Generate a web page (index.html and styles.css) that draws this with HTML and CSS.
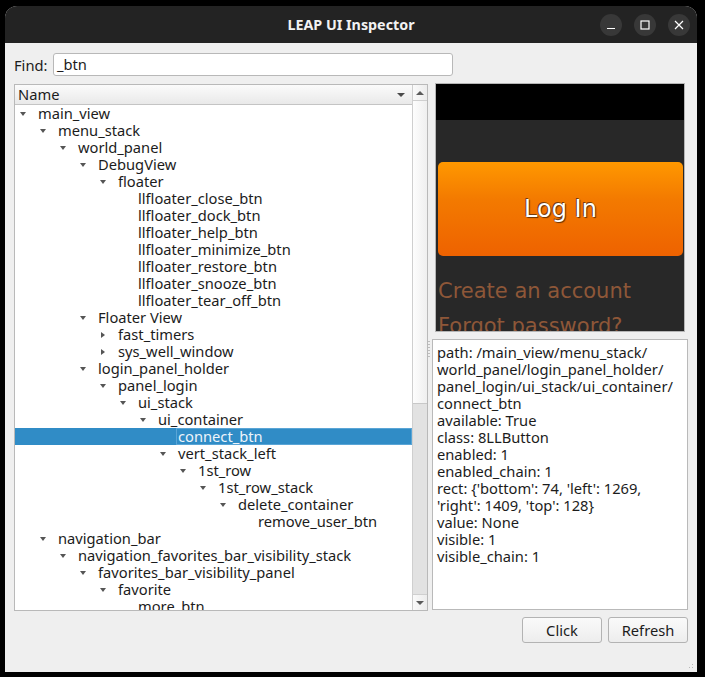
FILE: index.html
```html
<!DOCTYPE html>
<html>
<head>
<meta charset="utf-8">
<title>LEAP UI Inspector</title>
<link rel="stylesheet" href="styles.css">
</head>
<body>
<div class="window">
  <div class="titlebar">
    <div class="tb-spacer"></div>
    <div class="tb-title">LEAP UI Inspector</div>
    <div class="tb-buttons">
      <span class="tb-btn"><svg width="10" height="10" viewBox="0 0 10 10"><path d="M1 8.5H9" stroke="#fff" stroke-width="1.2"/></svg></span>
      <span class="tb-btn"><svg width="10" height="10" viewBox="0 0 10 10"><rect x="1" y="1" width="8" height="8" fill="none" stroke="#fff" stroke-width="1.2"/></svg></span>
      <span class="tb-btn"><svg width="10" height="10" viewBox="0 0 10 10"><path d="M1 1L9 9M9 1L1 9" stroke="#fff" stroke-width="1.2"/></svg></span>
    </div>
  </div>
  <div class="content">
    <div class="find-row">
      <label class="find-label">Find:</label>
      <div class="find-input">_btn</div>
    </div>
    <div class="main">
      <div class="tree">
        <div class="tree-body">
          <div class="tree-header">
            <span>Name</span>
            <span class="sort-arrow"></span>
          </div>
          <div class="rows">
            <div class="row l0"><span class="tw down"></span><span class="lbl">main_view</span></div>
            <div class="row l1"><span class="tw down"></span><span class="lbl">menu_stack</span></div>
            <div class="row l2"><span class="tw down"></span><span class="lbl">world_panel</span></div>
            <div class="row l3"><span class="tw down"></span><span class="lbl">DebugView</span></div>
            <div class="row l4"><span class="tw down"></span><span class="lbl">floater</span></div>
            <div class="row l5"><span class="tw"></span><span class="lbl">llfloater_close_btn</span></div>
            <div class="row l5"><span class="tw"></span><span class="lbl">llfloater_dock_btn</span></div>
            <div class="row l5"><span class="tw"></span><span class="lbl">llfloater_help_btn</span></div>
            <div class="row l5"><span class="tw"></span><span class="lbl">llfloater_minimize_btn</span></div>
            <div class="row l5"><span class="tw"></span><span class="lbl">llfloater_restore_btn</span></div>
            <div class="row l5"><span class="tw"></span><span class="lbl">llfloater_snooze_btn</span></div>
            <div class="row l5"><span class="tw"></span><span class="lbl">llfloater_tear_off_btn</span></div>
            <div class="row l3"><span class="tw down"></span><span class="lbl">Floater View</span></div>
            <div class="row l4"><span class="tw closed"></span><span class="lbl">fast_timers</span></div>
            <div class="row l4"><span class="tw closed"></span><span class="lbl">sys_well_window</span></div>
            <div class="row l3"><span class="tw down"></span><span class="lbl">login_panel_holder</span></div>
            <div class="row l4"><span class="tw down"></span><span class="lbl">panel_login</span></div>
            <div class="row l5"><span class="tw down"></span><span class="lbl">ui_stack</span></div>
            <div class="row l6"><span class="tw down"></span><span class="lbl">ui_container</span></div>
            <div class="row l7 sel"><span class="tw"></span><span class="lbl">connect_btn</span></div>
            <div class="row l7"><span class="tw down"></span><span class="lbl">vert_stack_left</span></div>
            <div class="row l8"><span class="tw down"></span><span class="lbl">1st_row</span></div>
            <div class="row l9"><span class="tw down"></span><span class="lbl">1st_row_stack</span></div>
            <div class="row l10"><span class="tw down"></span><span class="lbl">delete_container</span></div>
            <div class="row l11"><span class="tw"></span><span class="lbl">remove_user_btn</span></div>
            <div class="row l1"><span class="tw down"></span><span class="lbl">navigation_bar</span></div>
            <div class="row l2"><span class="tw down"></span><span class="lbl">navigation_favorites_bar_visibility_stack</span></div>
            <div class="row l3"><span class="tw down"></span><span class="lbl">favorites_bar_visibility_panel</span></div>
            <div class="row l4"><span class="tw down"></span><span class="lbl">favorite</span></div>
            <div class="row l5"><span class="tw"></span><span class="lbl">more_btn</span></div>
          </div>
        </div>
        <div class="vscroll">
          <div class="sb-btn"><span class="sb-up"></span></div>
          <div class="sb-thumb"></div>
          <div class="sb-track"></div>
          <div class="sb-btn"><span class="sb-down"></span></div>
        </div>
      </div>
      <div class="side">
        <div class="preview">
          <div class="pv-top"></div>
          <div class="pv-body">
            <div class="pv-login">Log In</div>
            <div class="pv-link">Create an account</div>
            <div class="pv-link">Forgot password?</div>
          </div>
        </div>
        <div class="info-wrap">
          <div class="grip-v"></div>
          <div class="info">
            <div>path: /main_view/menu_stack/</div>
            <div>world_panel/login_panel_holder/</div>
            <div>panel_login/ui_stack/ui_container/</div>
            <div>connect_btn</div>
            <div>available: True</div>
            <div>class: 8LLButton</div>
            <div>enabled: 1</div>
            <div>enabled_chain: 1</div>
            <div>rect: {'bottom': 74, 'left': 1269,</div>
            <div>'right': 1409, 'top': 128}</div>
            <div>value: None</div>
            <div>visible: 1</div>
            <div>visible_chain: 1</div>
          </div>
        </div>
        <div class="buttons">
          <button class="btn">Click</button>
          <button class="btn">Refresh</button>
        </div>
      </div>
    </div>
    <div class="size-grip"></div>
  </div>
</div>
</body>
</html>
```
FILE: styles.css
```css
html, body {
  margin: 0;
  padding: 0;
  background: #000;
}
body {
  width: 705px;
  height: 677px;
  overflow: hidden;
  font-family: "Noto Sans", "Open Sans", sans-serif;
  font-size: 14.7px;
  color: #1c1c1c;
}
.window {
  margin: 6px 0 0 5px;
  width: 692px;
  height: 666px;
  border-radius: 12px 12px 0 0;
  overflow: hidden;
  background: #efefef;
  display: flex;
  flex-direction: column;
}
.titlebar {
  height: 37px;
  background: #232323;
  display: grid;
  grid-template-columns: 1fr auto 1fr;
  align-items: center;
}
.tb-title {
  color: #f2f2f2;
  font-weight: bold;
  font-size: 14.3px;
  line-height: 18px;
}
.tb-buttons {
  justify-self: end;
  display: flex;
  gap: 12px;
  padding-right: 7px;
  padding-top: 1px;
}
.tb-btn {
  width: 22px;
  height: 22px;
  border-radius: 50%;
  background: #383838;
  display: flex;
  align-items: center;
  justify-content: center;
}
.content {
  flex: 1;
  padding: 10px 9px 0;
  position: relative;
}
.find-row {
  display: flex;
  align-items: center;
  height: 23px;
  line-height: 18px;
}
.find-label {
  width: 39px;
}
.find-input {
  box-sizing: border-box;
  width: 400px;
  height: 23px;
  background: #fff;
  border: 1px solid #b8b8b8;
  border-radius: 3px;
  padding: 0 0 0 3px;
  line-height: 20px;
}
.main {
  display: flex;
  gap: 4px;
  margin-top: 7px;
  align-items: flex-start;
}
.tree {
  box-sizing: border-box;
  margin-top: 1px;
  width: 414px;
  height: 527px;
  border: 1px solid #b9b9b9;
  background: #fff;
  display: flex;
}
.tree-body {
  flex: 1;
  min-width: 0;
  overflow: hidden;
}
.tree-header {
  height: 19px;
  line-height: 17px;
  border-bottom: 1px solid #c4c4c4;
  background: linear-gradient(#fbfbfb, #e9e9e9);
  display: flex;
  align-items: center;
  justify-content: space-between;
  padding: 0 7px 0 3px;
}
.sort-arrow {
  width: 0;
  height: 0;
  border-left: 4px solid transparent;
  border-right: 4px solid transparent;
  border-top: 4px solid #4a4a4a;
}
.rows {
  height: 505px;
  overflow: hidden;
}
.row {
  height: 17px;
  line-height: 17px;
  display: flex;
  align-items: center;
  white-space: nowrap;
  box-sizing: border-box;
}
.tw {
  flex: none;
  width: 8px;
  height: 17px;
  margin-right: 11px;
  display: flex;
  align-items: center;
  justify-content: center;
}
.tw.down::before {
  content: "";
  border-left: 3.5px solid transparent;
  border-right: 3.5px solid transparent;
  border-top: 4px solid #555;
}
.tw.closed::before {
  content: "";
  border-top: 3.5px solid transparent;
  border-bottom: 3.5px solid transparent;
  border-left: 4px solid #555;
}
.l0 { padding-left: 4px; }
.l1 { padding-left: 24px; }
.l2 { padding-left: 44px; }
.l3 { padding-left: 64px; }
.l4 { padding-left: 84px; }
.l5 { padding-left: 104px; }
.l6 { padding-left: 124px; }
.l7 { padding-left: 144px; }
.l8 { padding-left: 164px; }
.l9 { padding-left: 184px; }
.l10 { padding-left: 204px; }
.l11 { padding-left: 224px; }
.row.sel {
  background: #308cc6;
  color: #eef4fa;
}
.row.sel .lbl {
  flex: 1;
  align-self: stretch;
  margin-left: -2px;
  padding-left: 1px;
  border: 1px solid #5aa5d6;
  line-height: 15px;
}
.vscroll {
  width: 14px;
  flex: none;
  border-left: 1px solid #cfcfcf;
  display: flex;
  flex-direction: column;
  background: #e3e3e3;
}
.sb-btn {
  height: 15px;
  background: linear-gradient(90deg, #fafafa, #ececec);
  display: flex;
  align-items: center;
  justify-content: center;
}
.sb-btn:first-child {
  border-bottom: 1px solid #cfcfcf;
}
.sb-btn:last-child {
  border-top: 1px solid #cfcfcf;
}
.sb-up {
  border-left: 4px solid transparent;
  border-right: 4px solid transparent;
  border-bottom: 4px solid #5a5a5a;
}
.sb-down {
  border-left: 4px solid transparent;
  border-right: 4px solid transparent;
  border-top: 4px solid #5a5a5a;
}
.sb-thumb {
  height: 303px;
  box-sizing: border-box;
  border-bottom: 1px solid #c8c8c8;
  background: linear-gradient(90deg, #fdfdfd, #efefef);
}
.sb-track {
  flex: 1;
  background: #e2e2e2;
}
.side {
  width: 256px;
  display: flex;
  flex-direction: column;
}
.preview {
  box-sizing: border-box;
  margin: 0 3px;
  height: 249px;
  border: 1px solid #b5b5b5;
  background: #282828;
  overflow: hidden;
  display: flex;
  flex-direction: column;
}
.pv-top {
  height: 36px;
  background: #000;
  flex: none;
}
.pv-body {
  flex: 1;
  padding: 42px 1px 0 2px;
  font-family: "DejaVu Sans", sans-serif;
}
.pv-login {
  height: 94px;
  border-radius: 5px;
  background: linear-gradient(#ff9800, #f37a00 40%, #ee6200);
  color: #fff;
  font-size: 24px;
  display: flex;
  align-items: center;
  justify-content: center;
  text-shadow: 0 0 1px #5a2a00, 1px 1px 1px #6a3200, -1px -1px 0 #7a4010;
}
.pv-link {
  color: #8e5738;
  font-size: 21px;
  line-height: 35px;
  white-space: nowrap;
}
.pv-login + .pv-link {
  margin-top: 18px;
}
.info-wrap {
  margin-top: 7px;
  height: 271px;
  display: flex;
  position: relative;
}
.grip-v {
  position: absolute;
  left: -4px;
  top: 2px;
  width: 2px;
  height: 16px;
  background: repeating-linear-gradient(#bdbdbd 0 1px, transparent 1px 3px);
}
.info {
  flex: 1;
  box-sizing: border-box;
  background: #fff;
  border: 1px solid #b9b9b9;
  padding: 4px 4px 0;
  line-height: 17px;
  white-space: nowrap;
  overflow: hidden;
}
.buttons {
  margin-top: 7px;
  display: flex;
  justify-content: flex-end;
  gap: 6px;
}
.btn {
  box-sizing: border-box;
  width: 80px;
  height: 26px;
  border: 1px solid #b3b3b3;
  border-radius: 3px;
  background: linear-gradient(#fafafa, #ededed);
  font-family: "Noto Sans", "Open Sans", sans-serif;
  font-size: 14.7px;
  line-height: 18px;
  color: #1c1c1c;
  padding: 0;
}
.size-grip {
  position: absolute;
  right: 2px;
  bottom: 2px;
  width: 10px;
  height: 10px;
  background-image: radial-gradient(circle, #b8b8b8 0.8px, transparent 1px);
  background-size: 3px 3px;
  clip-path: polygon(100% 0, 100% 100%, 0 100%);
}
```
